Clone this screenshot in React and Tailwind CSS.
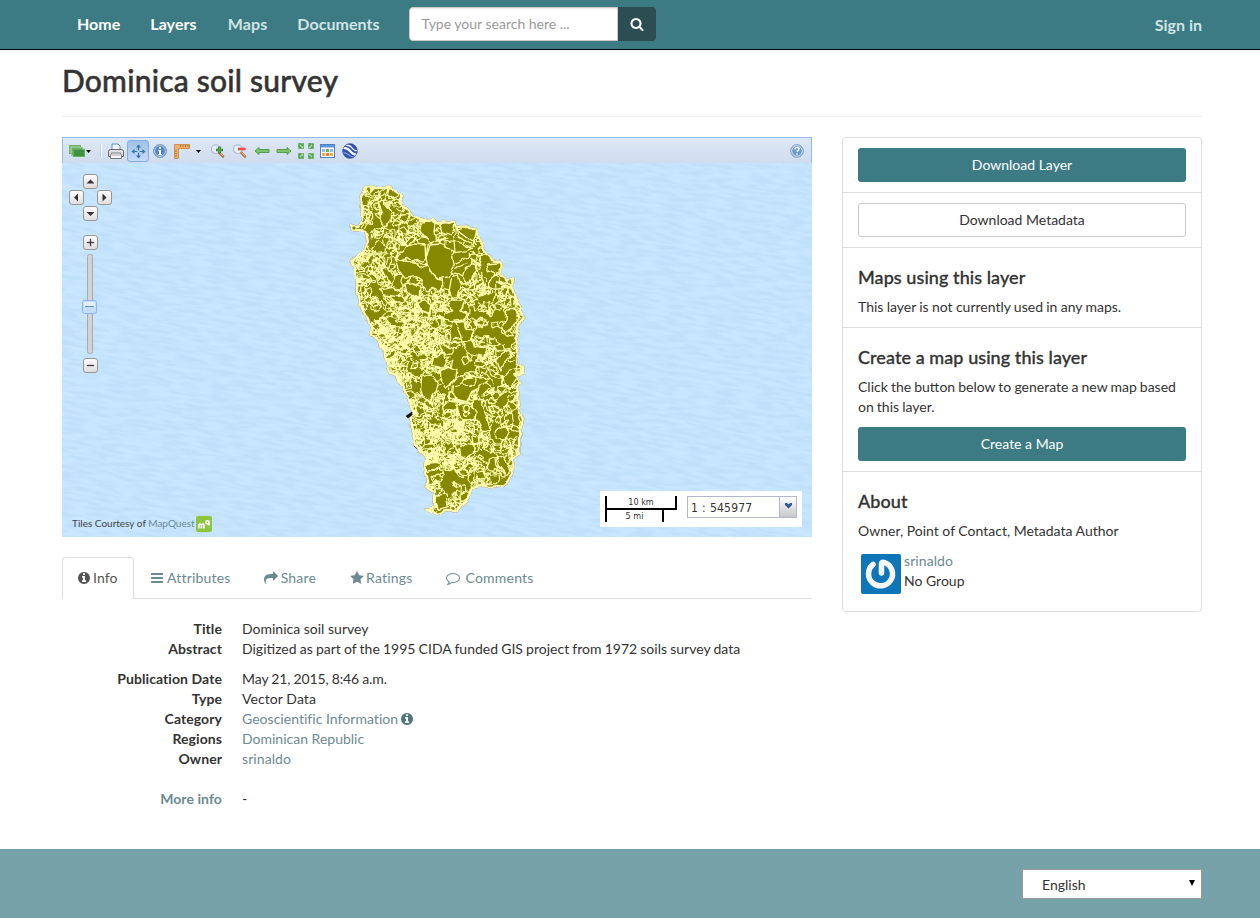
import React from 'react';

const GLYPHS = {
  search: 'M1216 832q0-185-131.5-316.5t-316.5-131.5-316.5 131.5-131.5 316.5 131.5 316.5 316.5 131.5 316.5-131.5 131.5-316.5zm512 832q0 52-38 90t-90 38q-54 0-90-38l-343-342q-179 124-399 124-143 0-273.5-55.5t-225-150-150-225-55.5-273.5 55.5-273.5 150-225 225-150 273.5-55.5 273.5 55.5 225 150 150 225 55.5 273.5q0 220-124 399l343 343q37 37 37 90z',
  info: 'M1152 1376v-160q0-14-9-23t-23-9h-96v-512q0-14-9-23t-23-9h-320q-14 0-23 9t-9 23v160q0 14 9 23t23 9h96v320h-96q-14 0-23 9t-9 23v160q0 14 9 23t23 9h448q14 0 23-9t9-23zm-128-896v-160q0-14-9-23t-23-9h-192q-14 0-23 9t-9 23v160q0 14 9 23t23 9h192q14 0 23-9t9-23zm640 416q0 209-103 385.5t-279.5 279.5-385.5 103-385.5-103-279.5-279.5-103-385.5 103-385.5 279.5-279.5 385.5-103 385.5 103 279.5 279.5 103 385.5z',
  bars: 'M1664 1344v128q0 26-19 45t-45 19h-1408q-26 0-45-19t-19-45v-128q0-26 19-45t45-19h1408q26 0 45 19t19 45zm0-512v128q0 26-19 45t-45 19h-1408q-26 0-45-19t-19-45v-128q0-26 19-45t45-19h1408q26 0 45 19t19 45zm0-512v128q0 26-19 45t-45 19h-1408q-26 0-45-19t-19-45v-128q0-26 19-45t45-19h1408q26 0 45 19t19 45z',
  share: 'M1792 640q0 26-19 45l-512 512q-19 19-45 19t-45-19-19-45v-256h-224q-98 0-175.5 6t-154 21.5-133 42.5-105.5 69.5-80 101-48.5 138.5-17.5 181q0 55 5 123 0 6 2.5 23.5t2.5 26.5q0 15-8.5 25t-23.5 10q-16 0-28-17-7-9-13-22t-13.5-30-10.5-24q-127-285-127-451 0-199 53-333 162-403 875-403h224v-256q0-26 19-45t45-19 45 19l512 512q19 19 19 45z',
  star: 'M1728 647q0 22-26 48l-363 354 86 500q1 7 1 20 0 21-10.5 35.5t-30.5 14.5q-19 0-40-12l-449-236-449 236q-22 12-40 12-21 0-31.5-14.5t-10.5-35.5q0-6 2-20l86-500-364-354q-25-27-25-48 0-37 56-46l502-73 225-455q19-41 49-41t49 41l225 455 502 73q56 9 56 46z',
  comment: 'M896 384q-204 0-381.5 69.5t-282 187.5-104.5 255q0 112 71.5 213.5t201.5 175.5l87 50-27 96q-24 91-70 172 152-63 275-171l43-38 57 6q69 8 130 8 204 0 381.5-69.5t282-187.5 104.5-255-104.5-255-282-187.5-381.5-69.5zm896 512q0 174-120 321.5t-326 233-450 85.5q-70 0-145-8-198 175-460 242-49 14-114 22h-5q-15 0-27-10.5t-16-27.5v-1q-3-4-.5-12t2-10 4.5-9.5l6-9 7-8.5 8-9q7-8 31-34.5t34.5-38 31-39.5 32.5-51 27-59 26-76q-157-89-247.5-220t-90.5-281q0-174 120-321.5t326-233 450-85.5 450 85.5 326 233 120 321.5z',
};

function Glyph({ name, className = 'h-3.5 w-3.5' }) {
  return (
    <svg viewBox="0 0 1792 1792" fill="currentColor" fillRule="evenodd" className={'shrink-0 ' + className}>
      <path d={GLYPHS[name]} />
    </svg>
  );
}

/* ---------- Soil map ---------- */

const COAST = '365,187 378,188 391,187 394,191 400,195 400,200 403,205 407,209 413,217 421,220 427,222 433,219 437,223 443,222 449,223 455,221 457,227 468,226 477,229 477,233 480,240 487,255 492,260 500,262 502,266 501,276 506,280 512,279 513,290 515,298 520,305 520,311 523,317 519,324 518,330 515,340 518,350 517,363 523,367 523,373 515,375 520,383 517,390 518,407 523,420 520,430 520,453 512,458 513,473 509,481 503,486 490,488 480,485 473,487 468,498 462,504 457,511 446,511 437,514 427,509 435,507 435,493 427,488 427,480 425,473 427,457 419,450 415,445 414,437 411,427 413,412 407,395 400,383 397,375 390,373 387,360 383,348 377,340 372,335 371,328 368,320 363,311 360,303 357,293 357,280 355,267 350,262 357,256 365,250 368,240 365,232 360,230 352,230 352,226 358,226 362,221 362,208 361,197';

function makeRandom(seed) {
  let s = seed;
  return () => {
    s = (s * 1664525 + 1013904223) % 4294967296;
    return s / 4294967296;
  };
}

function soilLines(count, seed, x0, y0, w, h, min, max) {
  const rnd = makeRandom(seed);
  let d = '';
  for (let i = 0; i < count; i++) {
    const cx = x0 + rnd() * w;
    const cy = y0 + rnd() * h;
    const rx = min + rnd() * (max - min);
    const ry = rx * (0.3 + rnd() * 0.7);
    const turn = rnd() * 3.14;
    const n = 10;
    for (let k = 0; k < n; k++) {
      const a = (k / n) * 6.283;
      const m = 0.55 + rnd() * 0.8;
      const px = Math.cos(a) * rx * m;
      const py = Math.sin(a) * ry * m;
      const x = cx + px * Math.cos(turn) - py * Math.sin(turn);
      const y = cy + px * Math.sin(turn) + py * Math.cos(turn);
      d += (k ? 'L' : 'M') + x.toFixed(1) + ' ' + y.toFixed(1);
    }
    d += 'Z';
  }
  return d;
}

const LINES = [
  soilLines(95, 7, 350, 185, 60, 80, 2, 6),
  soilLines(50, 19, 405, 218, 100, 80, 4, 11),
  soilLines(165, 23, 350, 255, 60, 110, 2, 7),
  soilLines(65, 31, 405, 290, 60, 60, 4, 9),
  soilLines(115, 43, 465, 265, 58, 120, 3, 7),
  soilLines(105, 51, 375, 330, 75, 55, 2, 7),
  soilLines(170, 67, 405, 395, 60, 70, 2, 7),
  soilLines(110, 79, 455, 380, 68, 105, 3, 7),
  soilLines(70, 83, 422, 455, 65, 60, 2, 6),
].join('');

/* Larger soil units, each given in a 3x local grid. */
const NORTH_UNITS = [
  '270,195 300,192 330,205 337,230 343,255 330,275 325,290 295,298 280,285 265,265 258,240 262,225',
  '200,200 225,192 255,195 257,240 248,247 235,238 215,242 200,232 180,240 165,235 175,220 190,215',
  '165,238 205,245 225,250 240,265 262,255 275,280 292,298 310,300 312,320 300,335 280,325 262,333 245,318 250,300 225,290 195,295 175,270',
  '95,205 112,182 140,200 138,218 110,220',
  '275,122 288,130 285,155 290,180 270,190 258,175 240,150 243,130',
  '300,130 318,128 345,124 342,148 330,165 305,155',
  '350,150 370,145 385,142 410,148 405,170 397,195 375,182 355,170',
  '342,180 365,190 395,205 380,212 345,218',
  '195,312 215,308 240,322 238,345 215,350 200,335',
  '112,70 130,60 135,75 152,90 150,130 135,140 122,130 125,100',
  '182,102 205,100 210,112 195,128 180,118',
  '232,365 250,360 272,375 268,402 245,395',
  '500,390 520,388 537,410 520,440 495,458 488,440 498,420',
  '325,368 345,360 375,362 362,392 382,405 370,420 335,425 310,418 312,400 335,390',
  '345,428 372,425 378,445 405,455 395,480 370,500 362,470',
  '440,252 480,248 480,265 470,285 445,272',
  '335,290 352,285 360,320 350,350 335,352 328,330',
  '378,265 405,255 410,275 395,290 385,310 370,290',
  '125,265 145,262 165,295 155,310 140,295',
  '118,330 160,322 188,340 175,350 130,345',
];
const SOUTH_UNITS = [
  '280,50 315,42 318,65 308,88 290,82 275,80',
  '245,108 265,102 282,110 295,130 288,155 270,182 250,172 242,150',
  '305,92 325,82 348,92 345,115 330,135 318,145 305,130',
  '340,138 360,132 385,115 425,110 440,122 415,145 395,155 380,185 350,178 338,160',
  '305,200 325,185 352,190 350,212 320,208 308,218',
  '490,112 508,90 530,85 532,110 520,125 510,145 498,135',
  '400,180 430,175 425,195 440,230 452,270 430,275 415,250 400,215',
  '475,262 498,258 505,275 495,295 470,298 465,280',
  '358,325 380,310 402,315 400,340 380,355 362,345',
  '445,360 468,352 472,385 455,395 442,382',
  '290,465 318,462 325,500 295,508 288,490',
  '360,462 388,455 382,478 362,485',
  '258,375 290,370 310,378 280,392 260,392',
  '370,5 395,0 400,18 440,25 435,50 410,45 385,40',
  '470,60 485,45 505,30 510,48 490,70 480,90',
  '395,290 418,290 420,310 400,315',
  '470,350 490,355 510,390 500,405 480,380',
];

function SoilMap() {
  return (
    <svg width="750" height="374" viewBox="62 163 750 374" className="block">
      <defs>
        <filter id="sea" x="0" y="0" width="100%" height="100%" colorInterpolationFilters="sRGB">
          <feTurbulence type="fractalNoise" baseFrequency="0.05 0.26" numOctaves="2" seed="8" />
          <feColorMatrix values="0 0 0 0 0.67  0 0 0 0 0.82  0 0 0 0 0.94  3 0 0 0 -1.1" />
        </filter>
        <filter id="rough" x="-5%" y="-5%" width="110%" height="110%" colorInterpolationFilters="sRGB">
          <feTurbulence type="fractalNoise" baseFrequency="0.13" numOctaves="1" seed="4" result="n" />
          <feDisplacementMap in="SourceGraphic" in2="n" scale="6" xChannelSelector="R" yChannelSelector="G" />
        </filter>
        <clipPath id="coast">
          <polygon points={COAST} />
        </clipPath>
      </defs>
      <rect x="62" y="163" width="750" height="374" fill="#c8e6ff" />
      <g transform="rotate(9 437 350)" opacity=".3">
        <rect x="0" y="60" width="880" height="590" filter="url(#sea)" />
      </g>
      <g filter="url(#rough)">
        <polygon points={COAST} fill="#868800" stroke="#b9a98a" strokeWidth="3" strokeLinejoin="round" />
        <g clipPath="url(#coast)" stroke="#ffffae" fill="none" strokeLinejoin="round">
          <path d={LINES} strokeWidth="1.1" />
          <g fill="#868800">
            <g transform="translate(340 180) scale(.33333)" strokeWidth="3.8">
              {NORTH_UNITS.map((p) => <polygon key={p} points={p} />)}
              <path d="M265 190q-8 40-5 55M350 150l60 45M345 250l55-25 40 0M343 265l40-15" fill="none" />
            </g>
            <g transform="translate(340 340) scale(.33333)" strokeWidth="3.8">
              {SOUTH_UNITS.map((p) => <polygon key={p} points={p} />)}
              <path d="M358 195q20-12 38 2q22 22 5 38q-25 12-42-8q-12-18-1-32z" />
              <circle cx="378" cy="205" r="10" />
              <circle cx="380" cy="220" r="6" />
              <path d="M328 150q10-45 60-47q30 10 15 30q-30 15-35-5q10-20 40-18M395 160q-5 12 5 14q15-2 14-16q-4-15-19 2" fill="none" />
            </g>
          </g>
        </g>
        <polygon points={COAST} fill="none" stroke="#ffffb2" strokeWidth="2" strokeLinejoin="round" />
      </g>
      <circle cx="354" cy="228" r="2.200" fill="#868800" stroke="#ffffae" />
      <path d="M406 416l6-4v3l-4 3zM414 446l3 3" fill="#111" stroke="#222" strokeWidth=".7" />
    </svg>
  );
}

/* ---------- Toolbar ---------- */

function Tool({ children, className = 'w-[22px]' }) {
  return <div className={'flex h-[22px] shrink-0 items-center justify-center ' + className}>{children}</div>;
}

function Icon16({ children }) {
  return <svg width="16" height="16" viewBox="0 0 16 16" className="shrink-0">{children}</svg>;
}

function Caret() {
  return <svg width="5" height="3" viewBox="0 0 5 3" className="shrink-0"><path d="M0 0h5L2.500 3z" fill="#000" /></svg>;
}

function Magnifier({ children }) {
  return (
    <Icon16>
      <circle cx="5.700" cy="6.200" r="4.300" fill="#e3effa" stroke="#aebfd4" strokeWidth="1.200" />
      <path d="M9.500 10l3.500 3.500" stroke="#b97b4a" strokeWidth="2.600" strokeLinecap="round" />
      <path d="M9.800 9.700l3.200 3.200" stroke="#e6b98e" strokeWidth="1" />
      {children}
    </Icon16>
  );
}

function Toolbar() {
  return (
    <div className="flex h-[26px] items-center border-x border-t border-[#99bbe8] bg-gradient-to-b from-[#dde8f5] to-[#cfdcee] pt-px">
      <Tool className="w-[38px] gap-px pr-[5px]">
        <Icon16>
          <rect x=".5" y="2.500" width="11" height="8" fill="#8cc686" stroke="#6fae6b" />
          <rect x="2.500" y="4.500" width="11" height="8" fill="#66ae62" stroke="#93ca8d" />
          <rect x="4.500" y="6.500" width="11" height="7" fill="#3f913f" stroke="#67ae61" />
        </Icon16>
        <Caret />
      </Tool>
      <div className="h-3.5 w-px bg-white/90 shadow-[-1px_0_0_#bfd0e6]" />
      <Tool className="ml-[3px] w-[22px]">
        <svg width="18" height="17" viewBox="0 0 18 17">
          <path d="M5 7V1h6l2 2v4z" fill="#f3f8ff" stroke="#5990cc" />
          <path d="M1.500 8.500q0-2 2-2h11q2 0 2 2v5h-15z" fill="#dedfe3" stroke="#66686e" />
          <path d="M3.500 13l1-3h9l1 3v2.500h-11z" fill="#f5f5f7" stroke="#77797f" />
          <path d="M5 12h8" stroke="#aaa" />
        </svg>
      </Tool>
      <Tool className="w-[22px] rounded-[3px] border border-[#85aede] bg-gradient-to-b from-[#9fc0e8] to-[#c3dbf7]">
        <Icon16>
          <path d="M8.500 2v12M2 8.500h13" stroke="#3870a7" strokeWidth="1.200" />
          <path d="M8.500 1.500L6 4.500h5zM8.500 15.500l-2.500-3h5zM1.500 8.500l3-2.500v5zM15.500 8.500l-3-2.500v5z" fill="#3870a7" />
          <rect x="7.500" y="7.500" width="2" height="2" fill="#d5e6f7" />
        </Icon16>
      </Tool>
      <Tool>
        <Icon16>
          <circle cx="8" cy="8" r="6.500" fill="#5487bd" stroke="#7f9fc3" />
          <circle cx="8" cy="8" r="5.400" fill="none" stroke="#c4d8ec" strokeWidth=".9" />
          <path d="M7 4h2v1.700H7zM6.300 7H9v4.300h1v1H6.200v-1h.9V8h-.8z" fill="#fff" />
        </Icon16>
      </Tool>
      <Tool className="w-9 gap-[6px] pr-1">
        <Icon16>
          <path d="M.5 1.500h15v4h-11v10h-4z" fill="#ecb36f" stroke="#c98746" strokeWidth=".9" />
          <path d="M6.500 2v2M9 2v2M11.500 2v2M14 2v2M1 8h2M1 10.500h2M1 13h2" stroke="#9d5e22" strokeWidth=".8" />
        </Icon16>
        <Caret />
      </Tool>
      <Tool>
        <Magnifier><path d="M9.500 3.500v7M6 7h7" stroke="#2f7d2b" strokeWidth="2.600" /><path d="M9.500 4.500v5M7 7h5" stroke="#64b050" strokeWidth="1" /></Magnifier>
      </Tool>
      <Tool>
        <Magnifier><path d="M6 6h7.500" stroke="#e33" strokeWidth="2.600" /><path d="M7 6h5.500" stroke="#ff7a72" strokeWidth=".8" /></Magnifier>
      </Tool>
      <Tool>
        <Icon16><path d="M1 8l4-3.500v2h10v3H5v2z" fill="#7cc36b" stroke="#4d9443" strokeWidth=".9" /></Icon16>
      </Tool>
      <Tool>
        <Icon16><path d="M15 8l-4-3.500v2H1v3h10v2z" fill="#7cc36b" stroke="#4d9443" strokeWidth=".9" /></Icon16>
      </Tool>
      <Tool>
        <Icon16>
          <path d="M.5.5h5v5h-5zM10.500.5h5v5h-5zM.5 10.500h5v5h-5zM10.500 10.500h5v5h-5z" fill="#57a552" stroke="#65a762" strokeDasharray="3 1" />
          <path d="M2 2l3 3M14 2l-3 3M2 14l3-3M14 14l-3-3" stroke="#b9e0ae" strokeWidth="1.100" />
        </Icon16>
      </Tool>
      <Tool>
        <Icon16>
          <rect x=".5" y="1.500" width="14" height="13" fill="#fff" stroke="#4a84c4" />
          <path d="M1 2h13v2.500H1z" fill="#5c98d8" />
          <path d="M2 6h3v3H2zM10 6h3v3h-3z" fill="#8fbbe8" />
          <path d="M6 6h3v3H6z" fill="#6fae48" />
          <path d="M2 10h3v3H2zM10 10h3v3h-3z" fill="#f0b03c" />
          <path d="M6 10h3v3H6z" fill="#ee7840" />
        </Icon16>
      </Tool>
      <Tool>
        <Icon16>
          <defs><clipPath id="globe"><circle cx="8" cy="8" r="7.500" /></clipPath></defs>
          <g clipPath="url(#globe)" fill="none" stroke="#fff">
            <rect width="16" height="16" fill="#2f52b4" stroke="none" />
            <path d="M0 5q5-1 8 3t9 4" strokeWidth="2.200" />
            <path d="M3 2q5 0 7 3t7 3" strokeWidth="1.300" />
            <path d="M0 10q4-1 7 2t6 2" strokeWidth="1" stroke="#9db7ea" />
          </g>
          <circle cx="8" cy="8" r="7.200" fill="none" stroke="#35508f" strokeWidth=".7" />
        </Icon16>
      </Tool>
      <Tool className="ml-auto mr-[3px] w-[22px]">
        <Icon16>
          <circle cx="8" cy="8" r="6.300" fill="#6c98ca" stroke="#7f9fc4" />
          <circle cx="8" cy="8" r="5.300" fill="none" stroke="#e4eef9" strokeWidth=".9" />
          <path d="M6 6.500q0-2 2-2t2 1.700q0 1-1.200 1.500-.7.300-.7 1.300M8 10.300v1.500" stroke="#fff" strokeWidth="1.400" fill="none" />
        </Icon16>
      </Tool>
    </div>
  );
}

function PanZoom() {
  const keys = [
    [83, 174, 'M90.500 179.500l4 4h-8z'],
    [69, 190, 'M74 197.500l4-4v8z'],
    [97, 190, 'M106.500 197.500l-4-4v8z'],
    [83, 206, 'M90.500 216l4-4h-8z'],
    [83, 235, 'M87 242h3v-3h1v3h3v1h-3v3h-1v-3h-3z'],
    [83, 358, 'M87 365h7v1h-7z'],
  ];
  return (
    <svg width="60" height="217" viewBox="62 163 60 217" className="absolute left-0 top-0">
      <defs>
        <linearGradient id="key" x2="0" y2="1"><stop stopColor="#fff" /><stop offset="1" stopColor="#dcdcdc" /></linearGradient>
      </defs>
      <rect x="87.500" y="254.500" width="5" height="99" rx="2" fill="#d3d3d3" stroke="#aaa" />
      {keys.map(([x, y, d]) => (
        <g key={d}>
          <rect x={x + 0.5} y={y + 0.5} width="14" height="14" rx="2.500" fill="url(#key)" stroke="#9b9590" />
          <path d={d} fill="#333" stroke={y > 230 ? '#555' : 'none'} strokeWidth=".4" />
        </g>
      ))}
      <rect x="82.500" y="300.500" width="14" height="13" rx="2" fill="#c5dcfb" stroke="#8fb3ea" />
      <path d="M84 302h11v5H84z" fill="#e4effd" />
      <path d="M85 306.500h9" stroke="#5f8fce" />
    </svg>
  );
}

function MapPanel() {
  return (
    <div className="h-[400px] w-[750px]">
      <Toolbar />
      <div className="relative">
        <SoilMap />
        <PanZoom />
        <div className="absolute bottom-[5px] left-[10px] flex items-center text-[10px] leading-4 text-[#444]">
          <span className="-mt-[2px]">Tiles Courtesy of <a className="text-[#6a8a94]">MapQuest</a></span>
          <svg width="16" height="16" viewBox="0 0 16 16" className="ml-px">
            <rect width="16" height="16" rx="2" fill="#8cc63f" />
            <path d="M2.800 12.500V8M2.800 9.500q0-1.500 1.300-1.500t1.300 1.500v3M5.400 9.500q0-1.500 1.300-1.500T8 9.500v3" fill="none" stroke="#fff" strokeWidth="1.700" />
            <path d="M13 4.500v5M13 6.300a1.600 1.600 0 1 0-3.200 0 1.600 1.600 0 1 0 3.200 0" fill="none" stroke="#fff" strokeWidth="1.500" />
          </svg>
        </div>
        <div className="absolute bottom-[10px] right-[10px] flex h-9 w-[202px] bg-white font-['DejaVu_Sans_Condensed','DejaVu_Sans',sans-serif] text-[#333]">
          <div className="ml-[5px] mt-[5px] w-[72px] text-center text-[9px]">
            <div className="h-[12px] border-x-2 border-black leading-3">10 km</div>
            <div className="h-0.5 bg-black" />
            <div className="h-3 w-[59px] border-x-2 border-black leading-3">5 mi</div>
          </div>
          <div className="ml-[10px] mt-[5px] flex h-[22px] w-[110px] border border-[#b5b8c8] bg-white">
            <div className="w-[91px] pl-[3px] pt-px text-[12px] leading-5 tracking-[0.2px] [word-spacing:0.4px]">1 : 545977</div>
            <div className="flex flex-1 items-center justify-center border-l border-[#b5b8c8] bg-gradient-to-b from-white to-[#c8c8cc]">
              <svg width="9" height="6" viewBox="0 0 9 6" className="-mt-0.5"><path d="M1 0h2l1.500 1.500L6 0h2v2L4.500 5.500 1 2z" fill="#32568f" /></svg>
            </div>
          </div>
        </div>
      </div>
    </div>
  );
}

/* ---------- Page ---------- */

function Navbar() {
  return (
    <header className="h-[50px] border-b border-[#080808] bg-[#3c7b83]">
      <div className="ml-[62px] flex h-[49px] w-[1140px] text-[16px] font-bold leading-[48px] text-[#d1e4e6]">
        <a className="px-[15px] text-white">Home</a>
        <a className="pl-[15px] pr-4 tracking-[0.1px] text-white">Layers</a>
        <a className="px-[15px] tracking-[0.1px]">Maps</a>
        <a className="pl-[15px] pr-3.5 tracking-[0.05px]">Documents</a>
        <div className="ml-[15px] mt-[7px] flex h-[34px] text-sm font-normal">
          <div className="w-[209px] rounded-l border border-[#ccc] bg-white pl-3 leading-8 text-[#999] shadow-[inset_0_1px_1px_rgba(0,0,0,0.075)]">Type your search here ...</div>
          <button className="flex w-[38px] items-center justify-center rounded-r bg-[#2c4e52] text-white"><Glyph name="search" /></button>
        </div>
        <a className="ml-auto pt-px">Sign in</a>
      </div>
    </header>
  );
}

function Tab({ icon, children, className = 'gap-[2px]' }) {
  return (
    <a className={'flex h-[41px] items-center pl-4 pr-[15px] tracking-[0.2px] ' + className}>
      <Glyph name={icon} />
      <span>{children}</span>
    </a>
  );
}

function Row({ label, children, className = '' }) {
  return (
    <div className={'flex ' + className}>
      <dt className="mr-5 w-40 text-right font-bold tracking-[0.08px]">{label}</dt>
      <dd className="flex items-center">{children}</dd>
    </div>
  );
}

function Heading({ children }) {
  return <h4 className="mb-[11px] text-lg font-medium leading-[18px] tracking-[0.07px] [-webkit-text-stroke:0.3px_#333]">{children}</h4>;
}

function Sidebar() {
  return (
    <aside className="w-[360px] self-start rounded border border-[#ddd]">
      <div className="border-b border-[#ddd] px-[15px] py-[10px]">
        <button className="block h-[34px] w-full rounded-[3px] bg-[#3c7b83] text-white">Download Layer</button>
      </div>
      <div className="border-b border-[#ddd] px-[15px] py-[10px]">
        <button className="block h-[34px] w-full rounded-[3px] border border-[#ccc] bg-white">Download Metadata</button>
      </div>
      <div className="h-20 border-b border-[#ddd] px-[15px] pt-5">
        <Heading>Maps using this layer</Heading>
        <p className="[word-spacing:-0.3px]">This layer is not currently used in any maps.</p>
      </div>
      <div className="h-36 border-b border-[#ddd] px-[15px] pt-5">
        <Heading>Create a map using this layer</Heading>
        <p className="mb-[10px] [word-spacing:-0.5px]">Click the button below to generate a new map based on this layer.</p>
        <button className="block h-[34px] w-full rounded-[3px] bg-[#3c7b83] text-white">Create a Map</button>
      </div>
      <div className="h-[139px] px-[15px] pt-5">
        <Heading>About</Heading>
        <p>Owner, Point of Contact, Metadata Author</p>
        <div className="ml-[3px] mt-[10px] flex gap-[3px]">
          <svg width="40" height="40" viewBox="0 0 40 40" className="mt-[3px]">
            <rect width="40" height="40" rx="2" fill="#0f75b9" />
            <path d="M12 10.500A12 12 0 1 0 24 8.700Q20.500 7.500 20.500 10V19" fill="none" stroke="#f4f5f7" strokeWidth="5.500" strokeLinecap="round" strokeLinejoin="round" />
          </svg>
          <div>
            <a className="block tracking-[0.08px] text-[#6c8a93]">srinaldo</a>
            <span className="block">No Group</span>
          </div>
        </div>
      </div>
    </aside>
  );
}

export default function App() {
  return (
    <div className="flex h-[918px] w-[1260px] flex-col overflow-hidden bg-white font-[Lato,sans-serif] text-sm leading-5 text-[#333]">
      <Navbar />
      <main className="ml-[62px] w-[1140px] flex-1">
        <h2 className="mb-5 h-[67px] border-b border-[#eee] pt-[14px] text-[30px] font-medium leading-[33px] tracking-[0.22px] [-webkit-text-stroke:0.5px_#333]">Dominica soil survey</h2>
        <div className="flex justify-between">
          <div className="w-[750px]">
            <MapPanel />
            <nav className="mt-5 flex h-[42px] border-b border-[#ddd] text-[#6c8a93]">
              <a className="flex h-[42px] w-[72px] items-center gap-[2px] rounded-t border border-b-0 border-[#ddd] bg-white pb-px pl-[14px] tracking-[0.1px] text-[#555]">
                <Glyph name="info" />
                <span>Info</span>
              </a>
              <Tab icon="bars" className="gap-[3px]">Attributes</Tab>
              <Tab icon="share" className="ml-[2px] gap-[3px]">Share</Tab>
              <Tab icon="star" className="ml-[3px] gap-[2px]">Ratings</Tab>
              <Tab icon="comment" className="ml-[2px] gap-[6px]">Comments</Tab>
            </nav>
            <dl className="pt-5">
              <Row label="Title">Dominica soil survey</Row>
              <Row label="Abstract"><span className="[word-spacing:-0.42px]">Digitized as part of the 1995 CIDA funded GIS project from 1972 soils survey data</span></Row>
              <Row label="Publication Date" className="mt-[10px]"><span className="tracking-[-0.1px] [word-spacing:-0.4px]">May 21, 2015, 8:46 a.m.</span></Row>
              <Row label="Type"><span className="tracking-[0.08px]">Vector Data</span></Row>
              <Row label="Category">
                <a className="tracking-[0.03px] text-[#6c8a93]">Geoscientific Information</a>
                <Glyph name="info" className="ml-[2px] h-3.5 w-3.5 text-[#527680]" />
              </Row>
              <Row label="Regions"><a className="text-[#6c8a93]">Dominican Republic</a></Row>
              <Row label="Owner"><a className="tracking-[0.08px] text-[#6c8a93]">srinaldo</a></Row>
              <Row label={<a className="text-[#6c8a93]">More info</a>} className="mt-5">-</Row>
            </dl>
          </div>
          <Sidebar />
        </div>
      </main>
      <footer className="flex h-[69px] justify-end bg-[#76a1a8] pr-[58px] pt-5">
        <div className="flex h-[30px] w-[180px] items-center justify-between border border-[#a09a98] bg-white pl-[19px] pr-[6px]">
          <span className="pt-0.5">English</span>
          <svg width="6" height="6" viewBox="0 0 6 6" className="-mt-0.5"><path d="M0 0h6L3 6z" fill="#000" /></svg>
        </div>
      </footer>
    </div>
  );
}
